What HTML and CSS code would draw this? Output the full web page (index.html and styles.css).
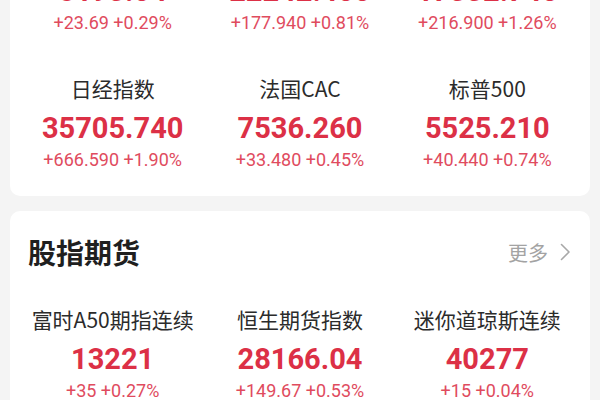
FILE: index.html
```html
<!DOCTYPE html>
<html lang="zh-CN">
<head>
<meta charset="utf-8">
<title>行情</title>
<link rel="stylesheet" href="styles.css">
</head>
<body>
<div class="page">
  <section class="card card-global">
    <div class="grid">
      <div class="item"><div class="name">英国富时100</div><div class="value">8193.04</div><div class="change">+23.69 +0.29%</div></div>
      <div class="item"><div class="name">台湾加权</div><div class="value">22242.400</div><div class="change">+177.940 +0.81%</div></div>
      <div class="item"><div class="name">纳斯达克</div><div class="value">17332.740</div><div class="change">+216.900 +1.26%</div></div>
      <div class="item"><div class="name">日经指数</div><div class="value">35705.740</div><div class="change">+666.590 +1.90%</div></div>
      <div class="item"><div class="name">法国CAC</div><div class="value">7536.260</div><div class="change">+33.480 +0.45%</div></div>
      <div class="item"><div class="name">标普500</div><div class="value">5525.210</div><div class="change">+40.440 +0.74%</div></div>
    </div>
  </section>
  <section class="card card-futures">
    <div class="card-head">
      <h2 class="title">股指期货</h2>
      <a class="more">更多<svg class="chev" width="11" height="18" viewBox="0 0 11 18"><path d="M1.5 1.5 L9 9 L1.5 16.5" fill="none" stroke="#a8a8a8" stroke-width="1.6" stroke-linecap="round" stroke-linejoin="round"/></svg></a>
    </div>
    <div class="grid">
      <div class="item"><div class="name">富时A50期指连续</div><div class="value">13221</div><div class="change">+35 +0.27%</div></div>
      <div class="item"><div class="name">恒生期货指数</div><div class="value">28166.04</div><div class="change">+149.67 +0.53%</div></div>
      <div class="item"><div class="name">迷你道琼斯连续</div><div class="value">40277</div><div class="change">+15 +0.04%</div></div>
    </div>
  </section>
</div>
</body>
</html>
```
FILE: styles.css
```css
html, body {
  margin: 0;
  padding: 0;
  background: #f4f4f4;
  font-family: "Roboto", "Noto Sans CJK SC", sans-serif;
  overflow: hidden;
}
.page {
  display: flex;
  flex-direction: column;
  gap: 15px;
  padding: 0 10px;
  margin-top: -83px;
}
.card {
  background: #ffffff;
  border-radius: 10px;
  padding: 20px 9px 23px;
}
.card-futures {
  padding-top: 23px;
}
.grid {
  display: grid;
  grid-template-columns: repeat(3, 1fr);
  row-gap: 38px;
}
.item {
  display: flex;
  flex-direction: column;
  align-items: center;
  white-space: nowrap;
}
.name {
  font-family: "Noto Sans CJK SC", sans-serif;
  font-size: 21px;
  line-height: 28px;
  color: #2b2b2b;
}
.value {
  margin-top: 8px;
  font-size: 29px;
  line-height: 36px;
  font-weight: 700;
  color: #dc3046;
}
.change {
  margin-top: 1px;
  font-size: 18px;
  line-height: 26px;
  color: #e04b5e;
}
.card-head {
  display: flex;
  justify-content: space-between;
  align-items: center;
  padding: 0 10px 0 9px;
  margin-bottom: 35px;
}
.title {
  margin: 0;
  font-family: "Noto Sans CJK SC", sans-serif;
  font-size: 28px;
  line-height: 36px;
  font-weight: 700;
  color: #1f1f1f;
}
.more {
  display: flex;
  align-items: center;
  gap: 12px;
  font-family: "Noto Sans CJK SC", sans-serif;
  font-size: 20px;
  color: #a3a3a3;
}
.chev {
  display: block;
}
```
